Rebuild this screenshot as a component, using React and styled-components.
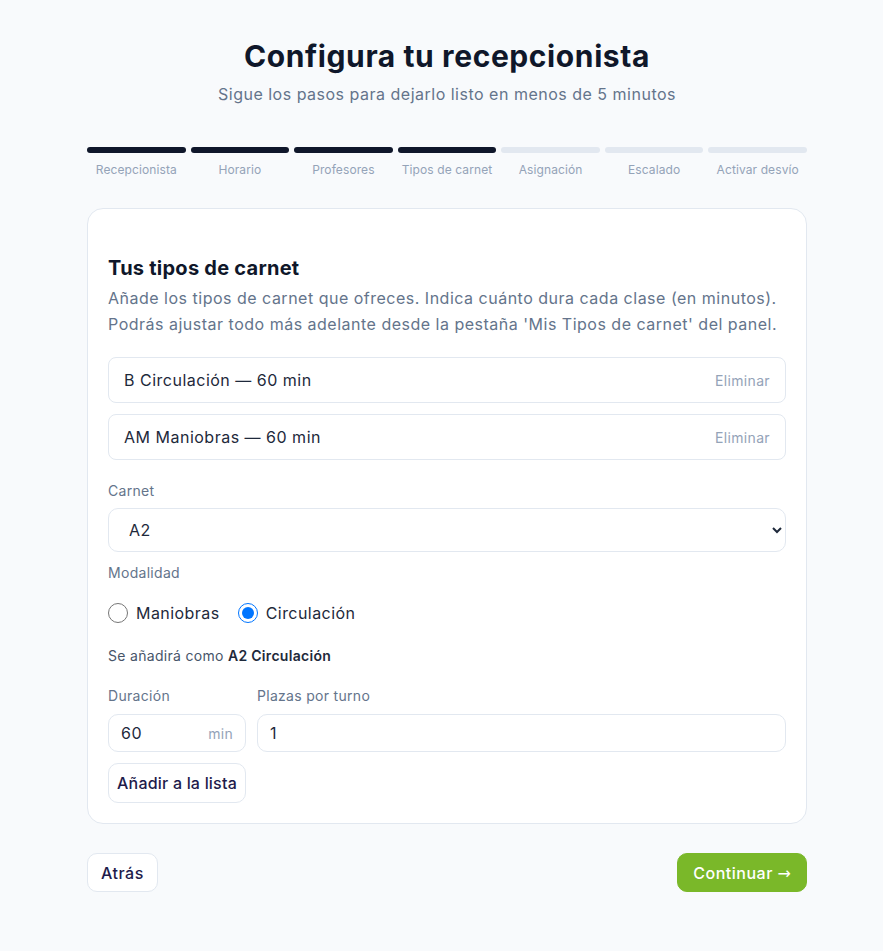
import React, { useState } from 'react';
import styled, { createGlobalStyle } from 'styled-components';

const GlobalStyle = createGlobalStyle`
  body {
    margin: 0;
    background: #f8fafc;
    font-family: 'Inter', 'Liberation Sans', sans-serif;
    color: #0f172a;
  }
`;

const Page = styled.div`
  width: 720px;
  margin: 0 auto;
  padding: 38px 0 40px 11px;
`;

const Title = styled.h1`
  margin: 0;
  text-align: center;
  font-size: 30px;
  line-height: 36px;
  font-weight: 700;
  letter-spacing: 0.6px;
  color: #0f172a;
`;

const Subtitle = styled.p`
  margin: 8px 0 0;
  text-align: center;
  font-size: 16px;
  line-height: 24px;
  letter-spacing: 0.5px;
  color: #64748b;
`;

const Steps = styled.div`
  display: grid;
  grid-template-columns: repeat(7, 1fr);
  gap: 5px;
  margin-top: 41px;
`;

const Step = styled.div`
  display: flex;
  flex-direction: column;
  align-items: center;
  gap: 9px;
`;

const Bar = styled.div`
  width: 100%;
  height: 6px;
  border-radius: 3px;
  background: ${(p) => (p.$done ? '#0f172a' : '#e2e8f0')};
`;

const StepLabel = styled.span`
  font-size: 12px;
  line-height: 16px;
  letter-spacing: 0.1px;
  color: #94a3b8;
`;

const Card = styled.section`
  margin-top: 30px;
  background: #fff;
  border: 1px solid #e2e8f0;
  border-radius: 16px;
  padding: 45px 20px 20px;
  display: flex;
  flex-direction: column;
`;

const CardTitle = styled.h2`
  margin: 0;
  font-size: 20px;
  line-height: 28px;
  font-weight: 700;
  letter-spacing: 0.25px;
  color: #0f172a;
`;

const Intro = styled.p`
  margin: 3px 0 0;
  font-size: 16px;
  line-height: 26px;
  letter-spacing: 0.5px;
  color: #64748b;
`;

const List = styled.div`
  display: flex;
  flex-direction: column;
  gap: 11px;
  margin-top: 20px;
`;

const Item = styled.div`
  height: 46px;
  box-sizing: border-box;
  display: flex;
  align-items: center;
  justify-content: space-between;
  padding: 0 15px;
  border: 1px solid #e2e8f0;
  border-radius: 8px;
  font-size: 16px;
  letter-spacing: 0.5px;
  color: #1e293b;
`;

const Remove = styled.button`
  border: 0;
  background: none;
  padding: 0;
  font: inherit;
  font-size: 14px;
  letter-spacing: 0.35px;
  color: #94a3b8;
  cursor: pointer;
`;

const Label = styled.div`
  margin-top: ${(p) => p.$top || 0}px;
  font-size: 14px;
  line-height: 20px;
  letter-spacing: 0.3px;
  color: #64748b;
`;

const Select = styled.select`
  margin-top: 7px;
  height: 44px;
  width: 100%;
  padding: 0 16px;
  border: 1px solid #e2e8f0;
  border-radius: 10px;
  background: #fff;
  font: inherit;
  font-size: 16px;
  letter-spacing: 0.5px;
  color: #1e293b;
`;

const Radios = styled.div`
  display: flex;
  align-items: center;
  gap: 18px;
  margin-top: 18px;
  height: 24px;
`;

const RadioLabel = styled.label`
  display: flex;
  align-items: center;
  gap: 8px;
  font-size: 16px;
  letter-spacing: 0.45px;
  color: #1e293b;

  input {
    width: 20px;
    height: 20px;
    margin: 0;
  }
`;

const Hint = styled.div`
  margin-top: 21px;
  font-size: 14px;
  line-height: 20px;
  letter-spacing: 0.3px;
  color: #475569;

  strong {
    font-weight: 600;
    color: #1e293b;
  }
`;

const Fields = styled.div`
  display: grid;
  grid-template-columns: 138px 1fr;
  gap: 11px;
  margin-top: 20px;
`;

const Field = styled.div`
  display: flex;
  flex-direction: column;
  gap: 8px;
`;

const InputBox = styled.div`
  height: 38px;
  box-sizing: border-box;
  display: flex;
  align-items: center;
  padding: 0 12px;
  border: 1px solid #e2e8f0;
  border-radius: 10px;
  background: #fff;
`;

const Input = styled.input`
  flex: 1;
  min-width: 0;
  border: 0;
  outline: none;
  padding: 0;
  font: inherit;
  font-size: 16px;
  letter-spacing: 0.5px;
  color: #1e293b;
  background: transparent;
`;

const Unit = styled.span`
  font-size: 14px;
  letter-spacing: 0.3px;
  color: #94a3b8;
`;

const AddButton = styled.button`
  align-self: flex-start;
  margin-top: 11px;
  width: 138px;
  height: 40px;
  padding: 0;
  border: 1px solid #e2e8f0;
  border-radius: 10px;
  background: #fff;
  font: inherit;
  font-size: 16px;
  font-weight: 500;
  letter-spacing: 0.2px;
  color: #1e1b4b;
  cursor: pointer;
`;

const Footer = styled.div`
  display: flex;
  justify-content: space-between;
  align-items: center;
  margin-top: 29px;
`;

const Button = styled.button`
  height: 39px;
  padding: 0 ${(p) => (p.$primary ? 15 : 13)}px;
  border-radius: 10px;
  border: 1px solid ${(p) => (p.$primary ? '#7ab829' : '#e2e8f0')};
  background: ${(p) => (p.$primary ? '#7ab829' : '#fff')};
  color: ${(p) => (p.$primary ? '#fff' : '#1e1b4b')};
  font: inherit;
  font-size: 16px;
  font-weight: 500;
  letter-spacing: 0.5px;
  cursor: pointer;
`;

const Arrow = styled.span`
  font-family: 'DejaVu Sans', sans-serif;
  font-weight: 400;
  letter-spacing: 0;
`;

const steps = [
  'Recepcionista',
  'Horario',
  'Profesores',
  'Tipos de carnet',
  'Asignación',
  'Escalado',
  'Activar desvío',
];

export default function App() {
  const [items, setItems] = useState(['B Circulación — 60 min', 'AM Maniobras — 60 min']);
  const [mode, setMode] = useState('Circulación');

  return (
    <>
      <GlobalStyle />
      <Page>
        <Title>Configura tu recepcionista</Title>
        <Subtitle>Sigue los pasos para dejarlo listo en menos de 5 minutos</Subtitle>

        <Steps>
          {steps.map((s, i) => (
            <Step key={s}>
              <Bar $done={i < 4} />
              <StepLabel>{s}</StepLabel>
            </Step>
          ))}
        </Steps>

        <Card>
          <CardTitle>Tus tipos de carnet</CardTitle>
          <Intro>
            Añade los tipos de carnet que ofreces. Indica cuánto dura cada clase (en minutos).
            Podrás ajustar todo más adelante desde la pestaña 'Mis Tipos de carnet' del panel.
          </Intro>

          <List>
            {items.map((it) => (
              <Item key={it}>
                <span>{it}</span>
                <Remove onClick={() => setItems(items.filter((x) => x !== it))}>Eliminar</Remove>
              </Item>
            ))}
          </List>

          <Label $top={21}>Carnet</Label>
          <Select defaultValue="A2">
            <option>AM</option>
            <option>A1</option>
            <option>A2</option>
            <option>A</option>
            <option>B</option>
          </Select>

          <Label $top={11}>Modalidad</Label>
          <Radios>
            {['Maniobras', 'Circulación'].map((m) => (
              <RadioLabel key={m}>
                <input
                  type="radio"
                  name="mode"
                  checked={mode === m}
                  onChange={() => setMode(m)}
                />
                {m}
              </RadioLabel>
            ))}
          </Radios>

          <Hint>
            Se añadirá como <strong>A2 {mode}</strong>
          </Hint>

          <Fields>
            <Field>
              <Label>Duración</Label>
              <InputBox>
                <Input defaultValue="60" />
                <Unit>min</Unit>
              </InputBox>
            </Field>
            <Field>
              <Label>Plazas por turno</Label>
              <InputBox>
                <Input defaultValue="1" />
              </InputBox>
            </Field>
          </Fields>

          <AddButton>Añadir a la lista</AddButton>
        </Card>

        <Footer>
          <Button>Atrás</Button>
          <Button $primary>
            Continuar <Arrow>→</Arrow>
          </Button>
        </Footer>
      </Page>
    </>
  );
}
